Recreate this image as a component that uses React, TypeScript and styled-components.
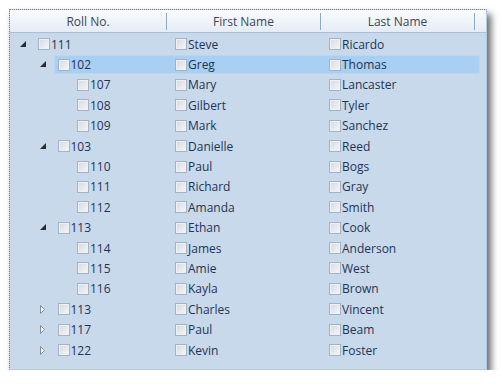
import styled, { createGlobalStyle } from 'styled-components'

interface Person {
  roll: string
  first: string
  last: string
  level: number
  expander?: 'open' | 'closed'
  selected?: boolean
}

const rows: Person[] = [
  { roll: '111', first: 'Steve', last: 'Ricardo', level: 0, expander: 'open' },
  { roll: '102', first: 'Greg', last: 'Thomas', level: 1, expander: 'open', selected: true },
  { roll: '107', first: 'Mary', last: 'Lancaster', level: 2 },
  { roll: '108', first: 'Gilbert', last: 'Tyler', level: 2 },
  { roll: '109', first: 'Mark', last: 'Sanchez', level: 2 },
  { roll: '103', first: 'Danielle', last: 'Reed', level: 1, expander: 'open' },
  { roll: '110', first: 'Paul', last: 'Bogs', level: 2 },
  { roll: '111', first: 'Richard', last: 'Gray', level: 2 },
  { roll: '112', first: 'Amanda', last: 'Smith', level: 2 },
  { roll: '113', first: 'Ethan', last: 'Cook', level: 1, expander: 'open' },
  { roll: '114', first: 'James', last: 'Anderson', level: 2 },
  { roll: '115', first: 'Amie', last: 'West', level: 2 },
  { roll: '116', first: 'Kayla', last: 'Brown', level: 2 },
  { roll: '113', first: 'Charles', last: 'Vincent', level: 1, expander: 'closed' },
  { roll: '117', first: 'Paul', last: 'Beam', level: 1, expander: 'closed' },
  { roll: '122', first: 'Kevin', last: 'Foster', level: 1, expander: 'closed' },
]

const GlobalStyle = createGlobalStyle`
  body {
    margin: 0;
    background: #ffffff;
    font-family: "Open Sans", "Noto Sans", sans-serif;
  }
`

const Page = styled.div`
  padding: 9px 0 0 9px;
`

const Grid = styled.div`
  width: 478px;
  height: 361px;
  box-sizing: border-box;
  background: #c9d9ec;
  border: 1px dotted #7a7a7a;
  border-right: 1px solid #b5c9e2;
  border-bottom: 1px solid #b5c9e2;
  box-shadow: 4px 5px 7px rgba(0, 0, 0, 0.6);
  overflow: hidden;
`

const Header = styled.div`
  display: grid;
  grid-template-columns: 157px 154px 154px 1fr;
  height: 22px;
  background: linear-gradient(#fbfcfe, #e4ecf7);
  border-bottom: 1px solid #a9bfd8;
`

const HeaderCell = styled.div<{ $last?: boolean }>`
  display: flex;
  align-items: center;
  justify-content: center;
  font-size: 12px;
  color: #3a4656;
  border-right: ${(p) => (p.$last ? 'none' : '1px solid #8fa9c9')};
  margin: 3px 0;
`

const Body = styled.div`
  padding-top: 1px;
`

const Row = styled.div`
  display: grid;
  grid-template-columns: 157px 154px 154px 1fr;
  height: 20.4px;
  position: relative;
`

const Highlight = styled.div<{ $level: number }>`
  position: absolute;
  top: 1px;
  bottom: 1px;
  left: ${(p) => 24 + p.$level * 19.5}px;
  right: 6px;
  background: #a9cff2;
  border: 1px solid #b9d7f3;
  border-radius: 2px;
`

const Cell = styled.div<{ $indent?: number }>`
  display: flex;
  align-items: center;
  padding-left: ${(p) => p.$indent ?? 8}px;
  font-size: 12px;
  color: #1e3456;
  position: relative;
  white-space: nowrap;
`

const Expander = styled.span`
  width: 18px;
  padding-left: 2px;
  display: flex;
  align-items: center;
`

const Check = styled.span`
  width: 10px;
  height: 10px;
  border: 1px solid #a3b2c4;
  background: linear-gradient(135deg, #d5d9de, #f6f7f9);
  box-shadow: inset 0 0 0 1px #eef0f3;
  flex: none;
  margin-right: 1px;
`

function ExpandIcon({ state }: { state: 'open' | 'closed' }) {
  if (state === 'open') {
    return (
      <svg width="7" height="7" viewBox="0 0 7 7">
        <polygon points="6,0 6,6 0,6" fill="#2b2b2b" />
      </svg>
    )
  }
  return (
    <svg width="6" height="9" viewBox="0 0 6 9">
      <polygon points="0.5,0.5 4.5,4.5 0.5,8.5" fill="#f4f6f8" stroke="#8a8e94" />
    </svg>
  )
}

export default function App() {
  return (
    <Page>
      <GlobalStyle />
      <Grid>
        <Header>
          <HeaderCell>Roll No.</HeaderCell>
          <HeaderCell>First Name</HeaderCell>
          <HeaderCell>Last Name</HeaderCell>
          <HeaderCell $last />
        </Header>
        <Body>
          {rows.map((r, i) => (
            <Row key={i}>
              {r.selected && <Highlight $level={r.level} />}
              <Cell $indent={8 + r.level * 19.5}>
                <Expander>{r.expander && <ExpandIcon state={r.expander} />}</Expander>
                <Check />
                {r.roll}
              </Cell>
              <Cell>
                <Check />
                {r.first}
              </Cell>
              <Cell>
                <Check />
                {r.last}
              </Cell>
            </Row>
          ))}
        </Body>
      </Grid>
    </Page>
  )
}
